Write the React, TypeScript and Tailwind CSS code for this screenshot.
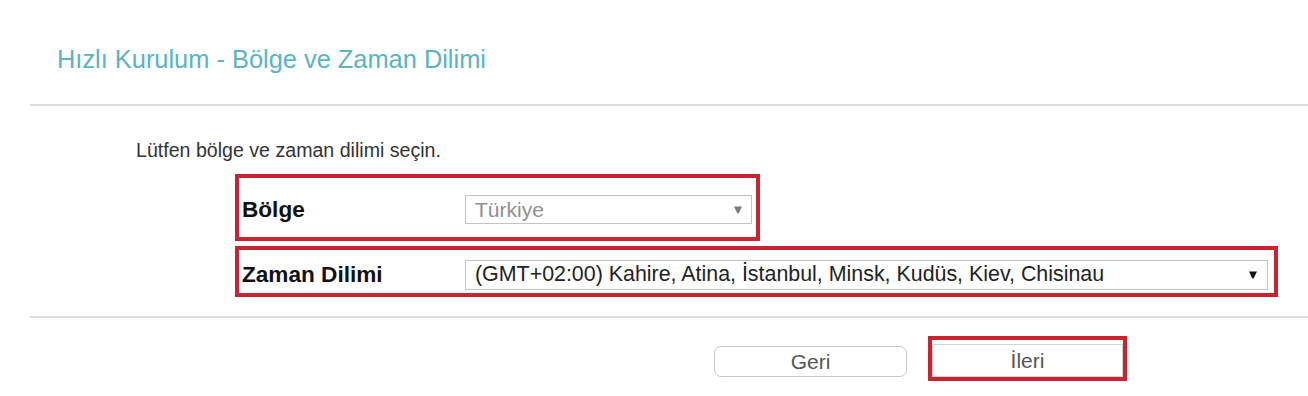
import React from "react";

function Arrow({ color }: { color: string }) {
  return (
    <svg width="8" height="8" viewBox="0 0 8 8" className="block">
      <path d="M0 0.5 H8 L4.6 7.5 H3.4 Z" fill={color} />
    </svg>
  );
}

export default function App() {
  return (
    <div
      className="w-[1308px] h-[396px] bg-white overflow-hidden"
      style={{ fontFamily: '"Liberation Sans", Arial, sans-serif' }}
    >
      <div className="mt-[44px] pl-[57px] h-[30px] leading-[30px] text-[25.4px] text-[#5ab4c2]">
        Hızlı Kurulum - Bölge ve Zaman Dilimi
      </div>
      <div className="mt-[30px] ml-[30px] h-[2px] bg-[#dedede]" />
      <div className="mt-[32px] pl-[136px] h-[24px] leading-[24px] text-[19.6px] text-[#333]">
        Lütfen bölge ve zaman dilimi seçin.
      </div>

      <div className="mt-[12px] ml-[235px] w-[525px] h-[67px] border-4 border-[#c9242f] flex items-center pt-[4px]">
        <div className="w-[226px] pl-[3px] text-[22.6px] font-bold text-[#111]">Bölge</div>
        <div className="w-[287px] h-[29px] border border-[#c4c4c4] flex items-center justify-between pl-[9px] pr-[9px] text-[21px] text-[#8f8f8f]">
          <span>Türkiye</span>
          <Arrow color="#7a7a7a" />
        </div>
      </div>

      <div className="mt-[5px] ml-[235px] w-[1043px] h-[51px] border-4 border-[#c9242f] flex items-center pt-[6px]">
        <div className="w-[226px] pl-[3px] text-[22.6px] font-bold text-[#111]">Zaman Dilimi</div>
        <div className="w-[803px] h-[30px] border border-[#c4c4c4] flex items-center justify-between pl-[9px] pr-[10px] text-[21.4px] text-[#222]">
          <span>(GMT+02:00) Kahire, Atina, İstanbul, Minsk, Kudüs, Kiev, Chisinau</span>
          <Arrow color="#111" />
        </div>
      </div>

      <div className="mt-[19px] ml-[30px] h-[2px] bg-[#dedede]" />

      <div className="mt-[18px] flex items-start">
        <button className="ml-[714px] mt-[10px] w-[193px] h-[31px] rounded-[7px] border border-[#c8c8c8] bg-white text-[21px] text-[#555] leading-none">
          Geri
        </button>
        <div className="ml-[21px] w-[199px] h-[45px] border-4 border-[#c9242f] flex items-end">
          <button className="w-full h-[33px] border border-[#d4d4d4] bg-white text-[21px] text-[#555] leading-none">
            İleri
          </button>
        </div>
      </div>
    </div>
  );
}
